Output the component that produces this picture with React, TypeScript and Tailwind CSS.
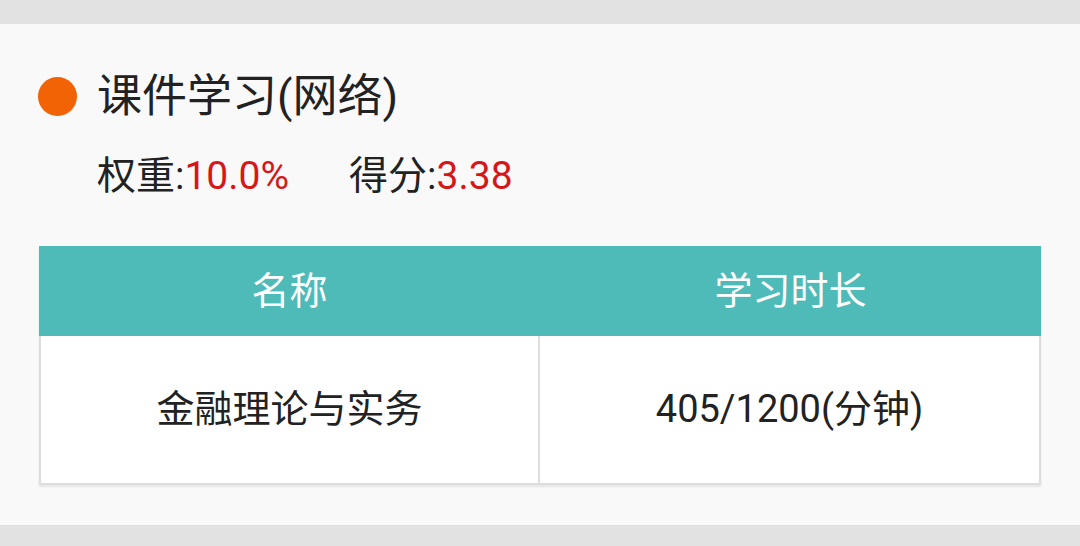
const font = { fontFamily: 'Roboto, "Noto Sans CJK SC", sans-serif' };

export default function App() {
  return (
    <div className="w-[1080px] h-[546px] bg-[#e2e2e2] flex flex-col overflow-hidden" style={font}>
      <div className="h-[24px] shrink-0" />
      <div className="h-[501px] shrink-0 bg-[#f9f9f9] flex flex-col">
        <div className="mt-[48px] h-[48px] flex items-center">
          <span className="ml-[38px] w-[39px] h-[39px] rounded-full bg-[#f26306] shrink-0" />
          <span className="ml-[20px] text-[45px] leading-none text-[#222]">课件学习(网络)</span>
        </div>
        <div className="mt-[36px] h-[40px] flex items-center pl-[97px] text-[39px] leading-none text-[#222]">
          <span>
            权重:<span className="text-[#d71618]">10.0%</span>
          </span>
          <span className="ml-[60px]">
            得分:<span className="text-[#d71618]">3.38</span>
          </span>
        </div>
        <div className="mt-[50px] mx-[39px] shadow-[0_2px_2px_rgba(0,0,0,0.08)]">
          <div className="h-[90px] bg-[#4fbbb9] grid grid-cols-2 text-white text-[38px]">
            <div className="flex items-center justify-center">名称</div>
            <div className="flex items-center justify-center">学习时长</div>
          </div>
          <div className="h-[149px] bg-white grid grid-cols-2 border-2 border-t-0 border-[#dedede] text-[#222] text-[38px]">
            <div className="flex items-center justify-center border-r-2 border-[#dedede]">金融理论与实务</div>
            <div className="flex items-center justify-center">405/1200(分钟)</div>
          </div>
        </div>
      </div>
    </div>
  );
}
